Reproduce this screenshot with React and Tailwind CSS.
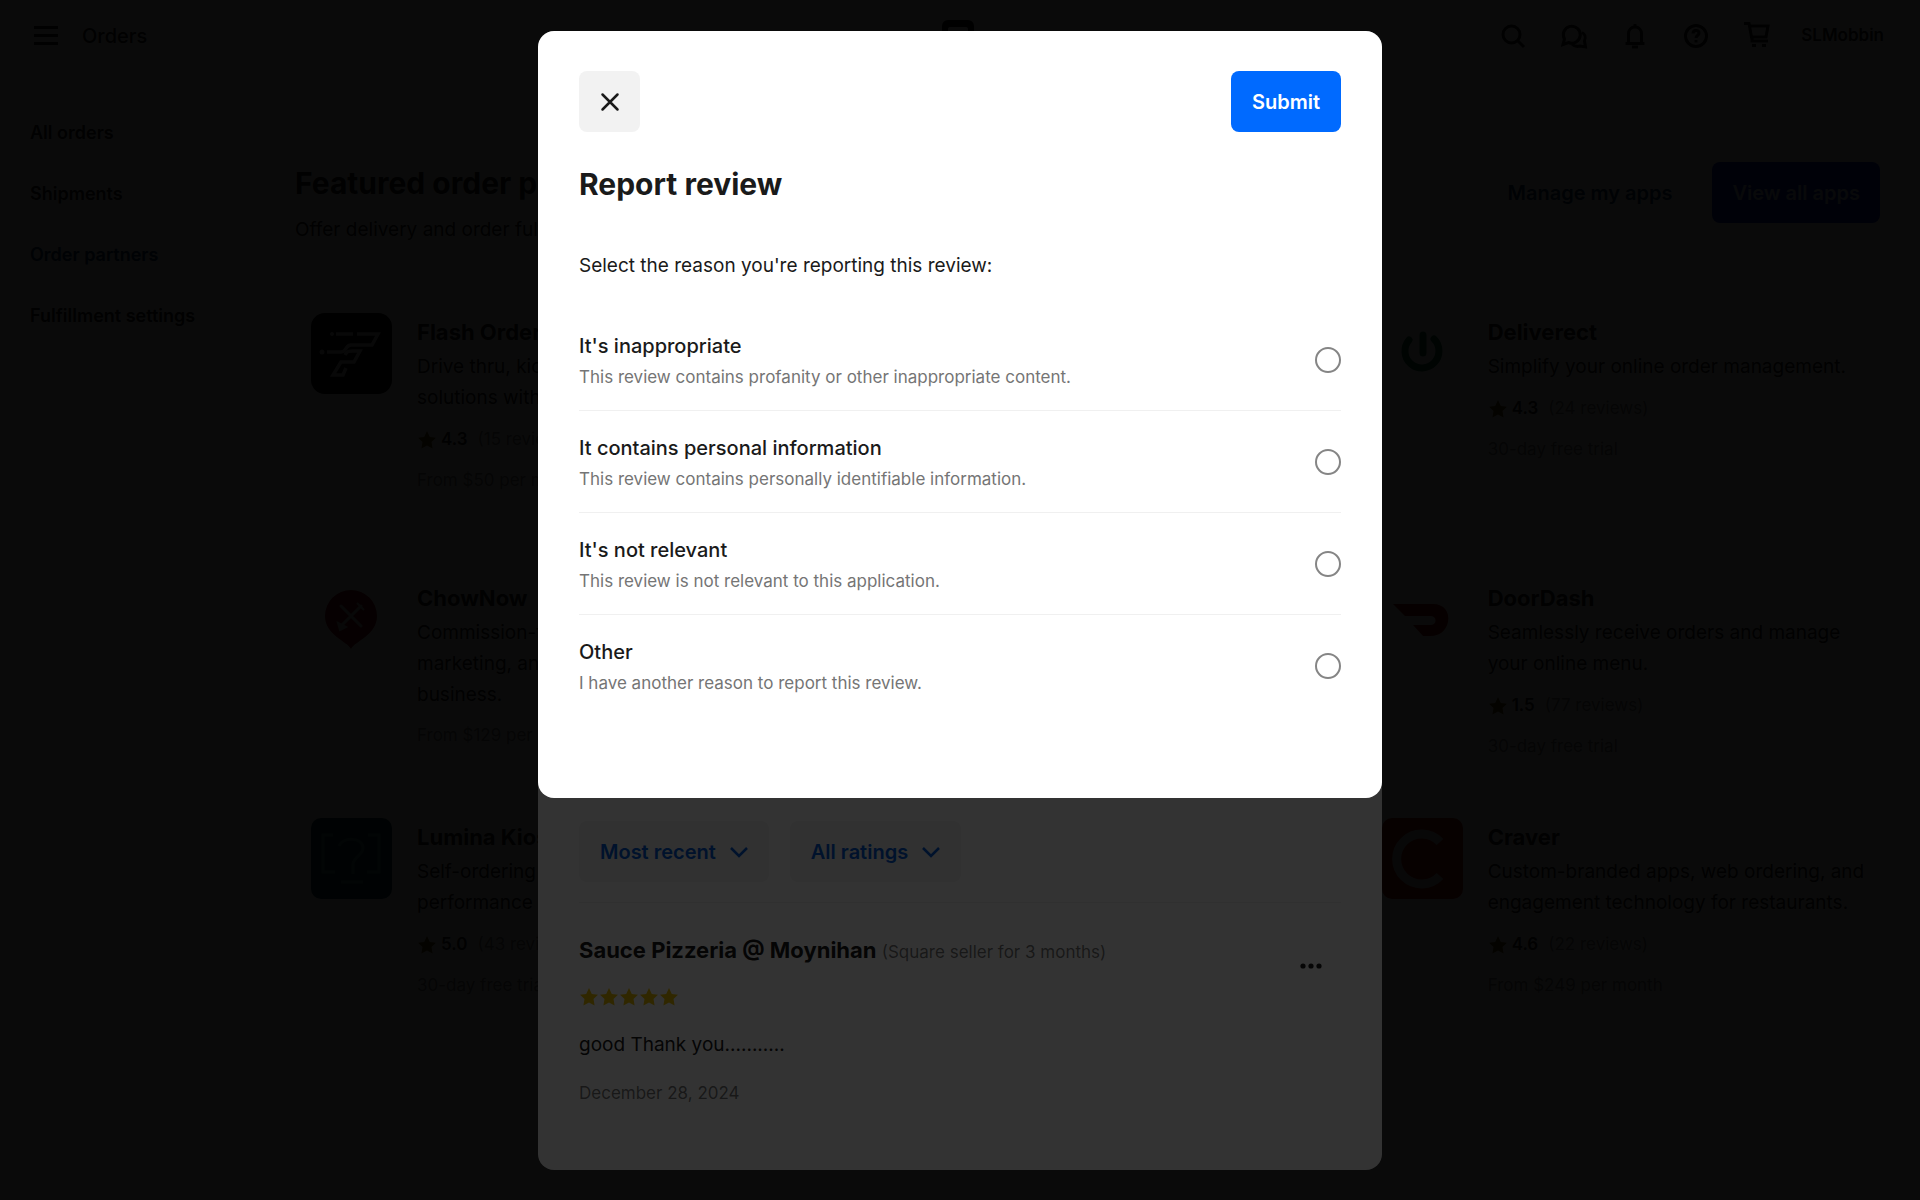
import { useState } from 'react';

const navItems = ['All orders', 'Shipments', 'Order partners', 'Fulfillment settings'];

const leftApps = [
    {
        name: 'Flash Order',
        logo: FlashLogo,
        lines: ['Drive thru, kiosk', 'solutions with'],
        rating: '4.3',
        reviews: '(15 reviews)',
        price: 'From $50 per month',
    },
    {
        name: 'ChowNow',
        logo: ChowNowLogo,
        lines: ['Commission-free', 'marketing, and', 'business.'],
        price: 'From $129 per month',
    },
    {
        name: 'Lumina Kiosk',
        logo: LuminaLogo,
        lines: ['Self-ordering', 'performance'],
        rating: '5.0',
        reviews: '(43 reviews)',
        price: '30-day free trial',
    },
];

const rightApps = [
    {
        name: 'Deliverect',
        logo: DeliverectLogo,
        lines: ['Simplify your online order management.'],
        rating: '4.3',
        reviews: '(24 reviews)',
        price: '30-day free trial',
    },
    {
        name: 'DoorDash',
        logo: DoorDashLogo,
        lines: ['Seamlessly receive orders and manage', 'your online menu.'],
        rating: '1.5',
        reviews: '(77 reviews)',
        price: '30-day free trial',
    },
    {
        name: 'Craver',
        logo: CraverLogo,
        lines: ['Custom-branded apps, web ordering, and', 'engagement technology for restaurants.'],
        rating: '4.6',
        reviews: '(22 reviews)',
        price: 'From $249 per month',
    },
];

const reasons = [
    {
        id: 'inappropriate',
        title: "It's inappropriate",
        description: 'This review contains profanity or other inappropriate content.',
    },
    {
        id: 'personal',
        title: 'It contains personal information',
        description: 'This review contains personally identifiable information.',
    },
    {
        id: 'irrelevant',
        title: "It's not relevant",
        description: 'This review is not relevant to this application.',
    },
    {
        id: 'other',
        title: 'Other',
        description: 'I have another reason to report this review.',
    },
];

function FlashLogo() {
    return (
        <svg viewBox="0 0 81 81" className="size-full">
            <rect width="81" height="81" rx="14" fill="#000" />
            <g fill="none" stroke="#ccc" strokeWidth="3.5">
                <path d="M25 21h17M46 21h21l-6 11H40c-6 0-4 7-10 7H16" />
                <path d="M34 42c2-4 4-4 8-4h7l-6 11H30l-8 13h10l3-7" />
            </g>
            <circle cx="21" cy="21" r="2" fill="#ccc" />
            <circle cx="11" cy="39" r="2.500" fill="#ccc" />
        </svg>
    );
}

function ChowNowLogo() {
    return (
        <svg viewBox="0 0 81 81" className="size-full">
            <path d="M40 70c-4-8-26-14-26-33a26 26 0 0 1 52 0c0 19-22 25-26 33z" fill="#901018" />
            <g stroke="#ccc" strokeWidth="3" strokeLinecap="round">
                <path d="M30 27l20 20M50 27L30 47" />
            </g>
            <path d="M46 24l7 7M27 44l8 4-6 3z" stroke="#ccc" strokeWidth="2" fill="#ccc" />
        </svg>
    );
}

function LuminaLogo() {
    return (
        <svg viewBox="0 0 81 81" className="size-full">
            <rect width="81" height="81" rx="10" fill="#06414b" />
            <g fill="none" stroke="#3f7d86" strokeWidth="3">
                <path d="M22 17H12v37h12M57 17h11v37H56" />
                <path d="M28 28c4-9 22-9 24 1 1 8-9 9-10 17v10" />
                <path d="M30 64h22" />
            </g>
        </svg>
    );
}

function DeliverectLogo() {
    return (
        <svg viewBox="0 0 81 81" className="size-full">
            <path
                d="M27 27a17 17 0 1 0 25-1M41 22v18"
                fill="none"
                stroke="#05603f"
                strokeWidth="7"
                strokeLinecap="round"
            />
        </svg>
    );
}

function DoorDashLogo() {
    return (
        <svg viewBox="0 0 81 81" className="size-full">
            <path
                d="M11 25h40c11 0 17 8 15 18-2 9-9 14-17 14h-8L31 46h18c6 0 6-9 0-9H23z"
                fill="#a01000"
            />
        </svg>
    );
}

function CraverLogo() {
    return (
        <svg viewBox="0 0 81 81" className="size-full">
            <rect width="81" height="81" rx="10" fill="#b0200f" />
            <path d="M58 24a25 25 0 1 0 0 34" fill="none" stroke="#ccc" strokeWidth="9" />
        </svg>
    );
}

function Star({ className }) {
    return (
        <svg viewBox="0 0 20 20" className={className} fill="currentColor" aria-hidden="true">
            <path d="M10 1l2.8 5.900 6.200.8-4.500 4.400 1.100 6.400L10 15.400l-5.600 3.100 1.100-6.400L1 7.700l6.200-.8z" />
        </svg>
    );
}

function Chevron() {
    return (
        <svg viewBox="0 0 18 18" className="size-[18px]" fill="none" stroke="currentColor" strokeWidth="2.5">
            <path d="M1 5l8 8 8-8" />
        </svg>
    );
}

function HeaderIcon({ label, children }) {
    return (
        <button type="button" aria-label={label} className="flex size-7 items-center justify-center">
            <svg viewBox="0 0 28 28" className="size-7" fill="none" stroke="currentColor" strokeWidth="3">
                {children}
            </svg>
        </button>
    );
}

function Header() {
    return (
        <header className="grid h-[72px] grid-cols-[1fr_auto_1fr] items-center pr-9 pl-8">
            <div className="flex items-center gap-[22px]">
                <button type="button" aria-label="Menu">
                    <svg viewBox="0 0 28 28" className="size-7" fill="none" stroke="currentColor" strokeWidth="3">
                        <path d="M2 5.500h24M2 13.500h24M2 21.500h24" />
                    </svg>
                </button>
                <span className="text-xl font-medium">Orders</span>
            </div>
            <svg viewBox="0 0 32 32" className="size-8" aria-hidden="true">
                <path
                    fillRule="evenodd"
                    d="M6 0h20a6 6 0 0 1 6 6v20a6 6 0 0 1-6 6H6a6 6 0 0 1-6-6V6a6 6 0 0 1 6-6zm2 7a2 2 0 0 0-2 2v15c0 1 1 2 2 2h16c1 0 2-1 2-2V9a2 2 0 0 0-2-2zm5 6h6v7h-6z"
                />
            </svg>
            <div className="flex items-center justify-end gap-[30px]">
                <div className="flex items-center gap-[33px]">
                    <HeaderIcon label="Search">
                        <circle cx="12.500" cy="12.500" r="8.500" />
                        <path d="M18.500 18.500L25 25" />
                    </HeaderIcon>
                    <HeaderIcon label="Messages">
                        <path d="M3 22.500l1.500-5.500a8.500 8.500 0 1 1 4 3.500z" />
                        <path d="M22 10.500c3 1.500 4 5 2.500 8.500l1 6-5.500-1c-3 .8-6 .2-8-2" />
                    </HeaderIcon>
                    <HeaderIcon label="Notifications">
                        <path d="M4.500 21.500h19M7.500 21v-9c0-4 2.500-7 6.500-7s6.500 3 6.500 7v9M14 2v3M11 25h6" />
                    </HeaderIcon>
                    <HeaderIcon label="Help">
                        <circle cx="14" cy="14" r="10.500" />
                        <path d="M11 11.500c0-4 6-4 6-.5 0 2.500-3 2.500-3 5M14 18v2.500" />
                    </HeaderIcon>
                    <HeaderIcon label="Cart">
                        <path d="M1 1.500h5L8.500 15H23l2-11H7M9 15v4h16" />
                        <path d="M9 23.500h4M19 23.500h4" />
                    </HeaderIcon>
                </div>
                <button type="button" className="text-[17px] font-semibold">SLMobbin</button>
            </div>
        </header>
    );
}

function AppCard({ app, className }) {
    const Logo = app.logo;
    return (
        <article className={className}>
            <div className="flex gap-[25px] pl-4">
                <div className="size-[81px] shrink-0">
                    <Logo />
                </div>
                <div className="min-w-0 whitespace-nowrap">
                    <h2 className="text-[22px] leading-[38px] font-bold">{app.name}</h2>
                    <p className="text-[19px] leading-[31px]">
                        {app.lines.map((line) => (
                            <span key={line} className="block">{line}</span>
                        ))}
                    </p>
                    {app.rating && (
                        <p className="mt-[11px] flex items-center text-[17px] leading-[31px]">
                            <Star className="size-5 text-[#6b5400]" />
                            <span className="ml-1 font-semibold">{app.rating}</span>
                            <span className="ml-2.5 text-black/55">{app.reviews}</span>
                        </p>
                    )}
                    <p className="mt-2.5 text-[17px] leading-[31px] text-black/55">{app.price}</p>
                </div>
            </div>
        </article>
    );
}

function OrdersPage() {
    return (
        <div className="min-h-screen bg-white">
            <Header />
            <div className="flex">
                <nav className="w-[255px] shrink-0 pt-[30px]">
                    {navItems.map((item) => (
                        <a
                            key={item}
                            href="#"
                            className={
                                item === 'Order partners'
                                    ? 'flex h-[61px] items-center bg-[#f0f5ff] pl-[30px] text-lg font-semibold text-[#003066]'
                                    : 'flex h-[61px] items-center pl-[30px] text-lg font-semibold'
                            }
                        >
                            {item}
                        </a>
                    ))}
                </nav>
                <main className="min-w-0 flex-1 pt-[90px] pr-10 pl-10">
                    <div className="flex items-start justify-between">
                        <div>
                            <h1 className="text-[30px] leading-[42px] font-bold">Featured order partners</h1>
                            <p className="mt-2.5 text-[19px] leading-[31px]">Offer delivery and order fulfillment</p>
                        </div>
                        <div className="flex items-center gap-5">
                            <button type="button" className="h-[61px] px-5 text-xl font-semibold text-[#003066]">
                                Manage my apps
                            </button>
                            <button type="button" className="h-[61px] rounded-lg bg-[#0020c0] px-5 text-xl font-semibold text-white/80">
                                View all apps
                            </button>
                        </div>
                    </div>
                    <div className="mt-[68px] grid grid-flow-col grid-cols-3 grid-rows-[266px_239px_auto] gap-x-[21px]">
                        {leftApps.map((app) => (
                            <AppCard key={app.name} app={app} className="col-start-1" />
                        ))}
                        {rightApps.map((app) => (
                            <AppCard key={app.name} app={app} className="col-start-3" />
                        ))}
                    </div>
                </main>
            </div>
        </div>
    );
}

function ReviewsPanel() {
    return (
        <section className="flex h-full w-full max-w-[844px] flex-col justify-end rounded-2xl bg-white px-[41px] pb-[61px]">
            <div className="flex gap-[21px] border-b border-[#f0f0f0] pb-5">
                <button type="button" className="flex h-[61px] items-center gap-3.5 rounded-lg bg-[#f2f2f2] px-[21px] text-xl font-semibold text-[#005ad9]">
                    Most recent
                    <Chevron />
                </button>
                <button type="button" className="flex h-[61px] items-center gap-3.5 rounded-lg bg-[#f2f2f2] px-[21px] text-xl font-semibold text-[#005ad9]">
                    All ratings
                    <Chevron />
                </button>
            </div>
            <article className="flex items-start justify-between pt-8">
                <div>
                    <h2 className="text-[22px] leading-[31px] font-bold">
                        Sauce Pizzeria @ Moynihan{' '}
                        <span className="text-[17px] font-normal text-black/55">(Square seller for 3 months)</span>
                    </h2>
                    <div className="mt-[19px] flex" role="img" aria-label="5 stars">
                        {[1, 2, 3, 4, 5].map((n) => (
                            <Star key={n} className="size-5 text-[#f0c400]" />
                        ))}
                    </div>
                    <p className="mt-[22px] text-[19px] leading-[31px]">good Thank you...........</p>
                    <p className="mt-[18px] text-[17px] leading-[31px] text-black/55">December 28, 2024</p>
                </div>
                <button type="button" aria-label="More actions" className="flex size-[61px] items-center justify-center">
                    <svg viewBox="0 0 22 6" className="h-1.5 w-[22px]" fill="currentColor">
                        <circle cx="3" cy="3" r="2.600" />
                        <circle cx="11" cy="3" r="2.600" />
                        <circle cx="19" cy="3" r="2.600" />
                    </svg>
                </button>
            </article>
        </section>
    );
}

function ReportDialog() {
    const [reason, setReason] = useState('');

    const handleSubmit = (e) => {
        e.preventDefault();
    };

    return (
        <form
            onSubmit={handleSubmit}
            role="dialog"
            aria-labelledby="report-title"
            className="w-full max-w-[844px] rounded-2xl bg-white px-[41px] pt-10 pb-[82px]"
        >
            <div className="flex items-center justify-between">
                <button type="button" aria-label="Close" className="flex size-[61px] items-center justify-center rounded-lg bg-[#f2f2f2]">
                    <svg viewBox="0 0 20 20" className="size-5" fill="none" stroke="currentColor" strokeWidth="2.500" strokeLinecap="round">
                        <path d="M2.500 2.500l15 15M17.500 2.500l-15 15" />
                    </svg>
                </button>
                <button type="submit" className="h-[61px] rounded-lg bg-[#006aff] px-[21px] text-xl font-semibold text-white">
                    Submit
                </button>
            </div>
            <h1 id="report-title" className="mt-8 text-[30px] leading-10 font-bold">Report review</h1>
            <p className="mt-[46px] text-[19px] leading-[31px]">Select the reason you're reporting this review:</p>
            <div className="mt-7 divide-y divide-[#f0f0f0]">
                {reasons.map((item) => (
                    <div key={item.id} className="flex items-center justify-between py-[18px]">
                        <label htmlFor={item.id} className="pt-1">
                            <span className="block text-xl leading-[31px] font-medium">{item.title}</span>
                            <span className="block text-[17px] leading-[30px] text-[#757575]">{item.description}</span>
                        </label>
                        <input
                            type="radio"
                            name="reason"
                            id={item.id}
                            checked={reason === item.id}
                            onChange={() => setReason(item.id)}
                            className="size-[26px] appearance-none rounded-full border-2 border-[#858585] checked:border-8 checked:border-[#006aff]"
                        />
                    </div>
                ))}
            </div>
        </form>
    );
}

export default function App() {
    return (
        <div className="font-['Inter',sans-serif] text-[#1a1a1a]">
            <OrdersPage />
            <div className="fixed inset-0 flex justify-center bg-black/80 pt-[31px] pb-[30px]">
                <ReviewsPanel />
            </div>
            <div className="fixed inset-0 flex items-start justify-center bg-black/80 pt-[31px]">
                <ReportDialog />
            </div>
        </div>
    );
}
